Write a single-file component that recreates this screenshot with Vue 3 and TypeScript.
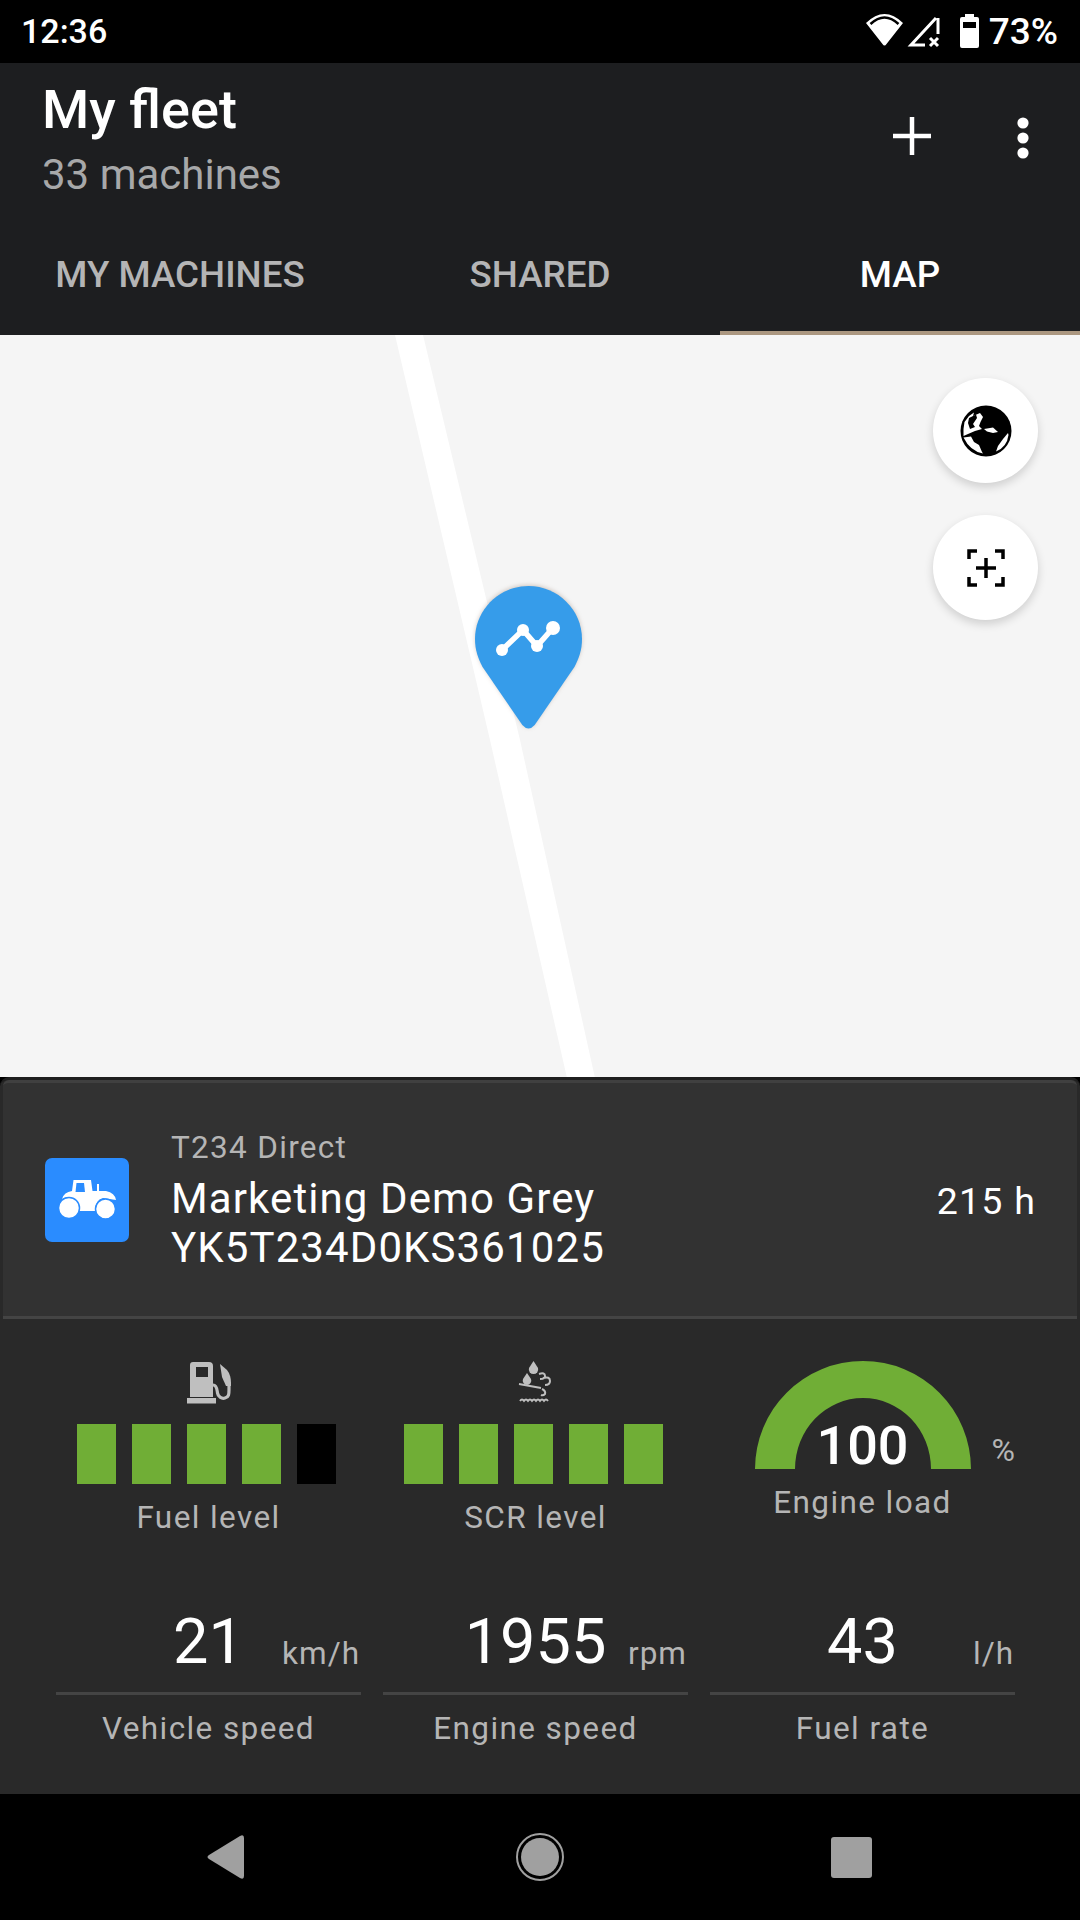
<script setup lang="ts">
interface Level { label: string; filled: number; icon: 'fuel' | 'scr' }
interface Reading { label: string; value: string; unit: string }

const tabs = ['MY MACHINES', 'SHARED', 'MAP']
const activeTab = 'MAP'

const levels: Level[] = [
  { label: 'Fuel level', filled: 4, icon: 'fuel' },
  { label: 'SCR level', filled: 5, icon: 'scr' },
]

const readings: Reading[] = [
  { label: 'Vehicle speed', value: '21', unit: 'km/h' },
  { label: 'Engine speed', value: '1955', unit: 'rpm' },
  { label: 'Fuel rate', value: '43', unit: 'l/h' },
]
</script>

<template>
  <div class="app">
    <div class="status-bar">
      <span class="clock">12:36</span>
      <div class="status-right">
        <svg class="status-icons" viewBox="0 0 130 50" width="130" height="50">
          <path d="M9 18 Q27.500 0 46 18 L29.500 39 Q27.500 42 25.500 39Z" fill="#fff" />
          <path d="M13.500 19 Q27.500 6 41.500 19" fill="none" stroke="#000" stroke-width="2.500" />
          <path d="M81 13 V29 M79 13 L54 40 H68" fill="none" stroke="#fff" stroke-width="3" />
          <path d="M73 33 L81 41 M81 33 L73 41" fill="none" stroke="#fff" stroke-width="3" />
          <path d="M108 9 H117 V12 H120 Q122 12 122 14 V41 Q122 43 120 43 H105 Q103 43 103 41 V14 Q103 12 105 12 H108Z" fill="#fff" />
          <rect x="106" y="17" width="13" height="6" fill="#000" />
        </svg>
        <span class="battery">73%</span>
      </div>
    </div>

    <header class="app-bar">
      <div class="title-row">
        <div>
          <div class="title">My fleet</div>
          <div class="subtitle">33 machines</div>
        </div>
        <div class="actions">
          <svg viewBox="0 0 38 38" width="38" height="38"><path d="M19 0 V38 M0 19 H38" stroke="#fff" stroke-width="4.500" /></svg>
          <svg viewBox="0 0 12 42" width="12" height="42">
            <circle cx="6" cy="6" r="5.600" fill="#fff" />
            <circle cx="6" cy="21" r="5.600" fill="#fff" />
            <circle cx="6" cy="36" r="5.600" fill="#fff" />
          </svg>
        </div>
      </div>
      <nav class="tabs">
        <div v-for="t in tabs" :key="t" class="tab" :class="{ active: t === activeTab }">{{ t }}</div>
      </nav>
    </header>

    <main class="map">
      <svg class="road" viewBox="0 0 1080 743" width="1080" height="743">
        <polygon points="395,0 423,0 520,405 595,743 567,743 490,405" fill="#fff" />
      </svg>

      <svg class="pin" viewBox="0 0 108 144" width="108" height="144">
        <path d="M53.500 0 C83 0 107 24 107 53 C107 64 104 72 99.600 80.700 L59.700 139 Q53.500 146 47.300 139 L7.400 80.700 C3 72 0 64 0 53 C0 24 24 0 53.500 0Z" fill="#369cea" />
        <path d="M27 64 L48 44 L62 60 L78 42" fill="none" stroke="#fff" stroke-width="5.500" />
        <circle cx="27" cy="64" r="6" fill="#fff" />
        <circle cx="48" cy="44" r="6" fill="#fff" />
        <circle cx="62" cy="60" r="6" fill="#fff" />
        <circle cx="78" cy="42" r="7" fill="#fff" />
      </svg>

      <div class="map-buttons">
        <button class="map-btn">
          <svg viewBox="0 0 70 70" width="70" height="70">
            <circle cx="35" cy="35" r="25.500" fill="#000" />
            <path d="M12.500 33 L13.500 26 L18 20 L23 16.500 L22 20 L29 17 L32 21 L29.500 26 L28 30 L31 33 L24 35 L17 38 L12.500 40Z" fill="#fff" />
            <path d="M18 22 L25 18.500 L26 22 L22 28 L24 31 L19 33 L17 27Z" fill="#000" />
            <path d="M12.500 41.500 L20 40.500 L23 46 L28 49 L31 56 L32 57.500 Q19 55 12.500 41.500Z" fill="#fff" />
            <path d="M33 33 L42 31.500 L47 36 L42 37 L36 35.500Z" fill="#fff" />
            <path d="M47 50 L52 43 L57 37 L57.500 39 Q56 51 45 55.500Z" fill="#fff" />
          </svg>
        </button>
        <button class="map-btn">
          <svg viewBox="0 0 38 38" width="38" height="38" fill="none" stroke="#000" stroke-width="3.500">
            <path d="M2 10 V2 H10 M28 2 H36 V10 M2 28 V36 H10 M28 36 H36 V28" />
            <path d="M19 9 V29 M9 19 H29" />
          </svg>
        </button>
      </div>
    </main>

    <section class="panel">
      <div class="machine">
        <div class="machine-tile">
          <svg viewBox="0 0 84 84" width="84" height="84">
            <path d="M17 41 Q19 34 27 33 L28.500 22 H46 L47.500 33 H52 V26 H54 V33 H61 Q70 35 71 42 L58 40 Q50 42 50 53 H34 Q33 40 24 39 Q20 39 17 41Z" fill="#fff" />
            <path d="M31.500 25 H39 L40 34 H30.500Z" fill="#2a8cff" />
            <circle cx="24" cy="50" r="10.500" fill="#fff" stroke="#2a8cff" stroke-width="1.500" />
            <circle cx="60.500" cy="51" r="10" fill="#fff" stroke="#2a8cff" stroke-width="1.500" />
          </svg>
        </div>
        <div class="machine-text">
          <div class="machine-model">T234 Direct</div>
          <div class="machine-name">Marketing Demo Grey</div>
          <div class="machine-name">YK5T234D0KS361025</div>
        </div>
        <div class="machine-hours">215 h</div>
      </div>

      <div class="gauges">
        <div v-for="l in levels" :key="l.label" class="gauge">
          <svg v-if="l.icon === 'fuel'" class="gauge-icon" viewBox="1 0 55 55" width="55" height="55">
            <path d="M13 7 H29 Q33 7 33 11 V42 H10 V10 Q10 7 13 7Z M16 12 V22 H28 V12Z" fill="#bfbfbf" fill-rule="evenodd" />
            <rect x="7" y="43" width="29" height="5.500" fill="#bfbfbf" />
            <path d="M33 30 C37 30 37 35 37.500 38 C38 42 42 44 45 43 C49 42 49 39 49 35 V27" fill="none" stroke="#bfbfbf" stroke-width="3.200" />
            <path d="M40 9 L47 15 Q51 20 51 28 L51 31 H46 L42 22 Z" fill="#bfbfbf" />
          </svg>
          <svg v-else class="gauge-icon" viewBox="0 0 55 55" width="55" height="55">
            <path d="M25.500 6 L30 13 A4.700 4.700 0 1 1 21 13Z" fill="#bfbfbf" />
            <path d="M19 18 L23 24 A4.300 4.300 0 1 1 15 24Z" fill="#bfbfbf" />
            <path d="M11 29 L33 33 M31 19 Q37 17 37 21 Q37 24 32 24 M35 23 Q42 21 42 26 Q42 30 37 30 M34 34 Q38 36 37 39 Q35 41 33 40" fill="none" stroke="#bfbfbf" stroke-width="2" />
            <path d="M12 46 Q14 43 16 46 Q18 43 20 46 Q22 43 24 46 Q26 43 28 46 Q30 43 32 46 Q34 43 36 46 Q38 43 40 46" fill="none" stroke="#bfbfbf" stroke-width="1.800" />
          </svg>
          <div class="bars">
            <span v-for="n in 5" :key="n" class="bar" :class="{ on: n <= l.filled }"></span>
          </div>
          <div class="caption level-caption">{{ l.label }}</div>
        </div>

        <div class="gauge">
          <div class="arc">
            <svg viewBox="0 0 216 108" width="216" height="108">
              <path d="M0 108 A108 108 0 0 1 216 108 H176 A68 71 0 0 0 40 108Z" fill="#70ae36" />
            </svg>
            <span class="arc-value">100</span>
            <span class="arc-unit">%</span>
          </div>
          <div class="caption load-caption">Engine load</div>
        </div>
      </div>

      <div class="readings">
        <div v-for="r in readings" :key="r.label" class="reading">
          <div class="reading-top">
            <span class="reading-value">{{ r.value }}</span>
            <span class="reading-unit">{{ r.unit }}</span>
          </div>
          <div class="caption">{{ r.label }}</div>
        </div>
      </div>
    </section>

    <footer class="nav-bar">
      <svg viewBox="0 0 38 44" width="38" height="44"><path d="M2 20 L33 1 Q37 -1 37 3 V41 Q37 45 33 43 L2 24 Q-1 22 2 20Z" fill="#a0a0a0" /></svg>
      <svg class="nav-home" viewBox="0 0 48 48" width="48" height="48">
        <circle cx="24" cy="24" r="23" fill="none" stroke="#a0a0a0" stroke-width="2" />
        <circle cx="24" cy="24" r="19" fill="#a0a0a0" />
      </svg>
      <div class="nav-square"></div>
    </footer>
  </div>
</template>

<style scoped>
.app {
  width: 1080px;
  height: 1920px;
  display: flex;
  flex-direction: column;
  font-family: Roboto, "Liberation Sans", sans-serif;
  color: #fff;
  overflow: hidden;
}

.status-bar {
  height: 63px;
  background: #000;
  display: flex;
  align-items: center;
  justify-content: space-between;
  padding: 0 22px 0 21px;
  flex: none;
}
.clock { font-size: 34px; font-weight: 500; line-height: 63px; }
.status-right { display: flex; align-items: center; }
.status-icons { display: block; margin-right: -1px; margin-top: -4px; }
.battery { font-size: 37px; font-weight: 500; line-height: 63px; margin-left: 3px; }

.app-bar { background: #1d1e20; flex: none; height: 272px; display: flex; flex-direction: column; }
.title-row {
  height: 147px;
  padding: 12px 51px 0 42px;
  display: flex;
  justify-content: space-between;
  box-sizing: border-box;
}
.title { font-size: 54px; font-weight: 500; line-height: 70px; }
.subtitle { font-size: 42px; line-height: 56px; color: #a7a8a9; margin-top: 2px; }
.actions { display: flex; align-items: flex-start; gap: 86px; padding-top: 42px; }
.actions svg { display: block; }

.tabs { display: flex; flex: 1; }
.tab {
  flex: 1;
  display: flex;
  align-items: center;
  justify-content: center;
  font-size: 36.750px;
  font-weight: 500;
  color: #b4b4b5;
  border-bottom: 4px solid transparent;
  padding-top: 8px;
}
.tab.active { color: #fff; border-bottom-color: #ab9780; }

.map { flex: 1; background: #f5f5f5; position: relative; overflow: hidden; }
.road { position: absolute; left: 0; top: 0; }
.pin { position: absolute; left: 475px; top: 251px; filter: drop-shadow(0 -1px 2px rgba(120, 90, 70, 0.3)); }
.map-buttons {
  position: absolute;
  top: 43px;
  right: 42px;
  display: flex;
  flex-direction: column;
  gap: 32px;
}
.map-btn {
  width: 105px;
  height: 105px;
  border: 0;
  padding: 0;
  border-radius: 50%;
  background: #fff;
  box-shadow: 0 4px 10px rgba(0, 0, 0, 0.16);
  display: flex;
  align-items: center;
  justify-content: center;
}

.panel {
  flex: none;
  height: 717px;
  box-sizing: border-box;
  background: #292929;
  border-top: 3px solid #1f1f1f;
  border-radius: 9px 9px 0 0;
}
.machine {
  height: 239px;
  box-sizing: border-box;
  margin: 0 3px;
  background: #323232;
  border-top: 3px solid #404040;
  border-bottom: 3px solid #444;
  border-radius: 6px 6px 0 0;
  padding: 0 41px 0 42px;
  display: flex;
  align-items: center;
}
.machine-tile {
  width: 84px;
  height: 84px;
  background: #2a8cff;
  border-radius: 7px;
  flex: none;
  margin-right: 42px;
}
.machine-tile svg { display: block; }
.machine-text { flex: 1; }
.machine-model { font-size: 31.500px; line-height: 46px; letter-spacing: 1.300px; color: #b5b5b5; margin-top: -3px; margin-bottom: 3px; }
.machine-name { font-size: 42px; line-height: 49px; letter-spacing: 1.100px; }
.machine-hours { font-size: 37.500px; letter-spacing: 1.200px; margin-top: 3px; }

.gauges {
  display: grid;
  grid-template-columns: repeat(3, 327px);
  padding: 36px 54px 0 45px;
  height: 285px;
  box-sizing: border-box;
}
.gauge { display: flex; flex-direction: column; align-items: center; }
.gauge-icon { display: block; margin-bottom: 14px; }
.bars { display: flex; gap: 16px; margin-right: 4px; }
.bar { width: 39px; height: 60px; background: #000; }
.bar.on { background: #70ae36; }
.caption { font-size: 31.500px; line-height: 40px; letter-spacing: 1.400px; color: #b5b5b5; text-align: center; }
.level-caption { margin-top: 14px; }
.load-caption { margin-top: 14px; }

.arc { position: relative; width: 216px; height: 108px; margin-top: 6px; }
.arc svg { display: block; }
.arc-value { position: absolute; left: 0; right: 0; bottom: -8px; text-align: center; font-size: 54px; line-height: 62px; font-weight: 500; }
.arc-unit { position: absolute; left: 237px; bottom: 1px; font-size: 32px; line-height: 36px; color: #b5b5b5; }

.readings {
  display: grid;
  grid-template-columns: repeat(3, 327px);
  padding: 0 54px 0 45px;
}
.reading { padding: 0 11px; }
.reading-top {
  position: relative;
  height: 91px;
  box-sizing: border-box;
  border-bottom: 3px solid #444;
  text-align: center;
}
.reading-value { font-size: 63px; line-height: 76px; }
.reading-unit { position: absolute; right: 1px; top: 30px; font-size: 31.500px; line-height: 40px; letter-spacing: 1px; color: #b5b5b5; }
.reading .caption { margin-top: 14px; }

.nav-bar {
  flex: none;
  height: 126px;
  background: #000;
  display: flex;
  align-items: center;
  padding-left: 207px;
}
.nav-home { margin: 0 267px 0 271px; }
.nav-square { width: 41px; height: 41px; background: #a0a0a0; border-radius: 3px; }
</style>

<style>
html, body { background: #000; }
</style>
